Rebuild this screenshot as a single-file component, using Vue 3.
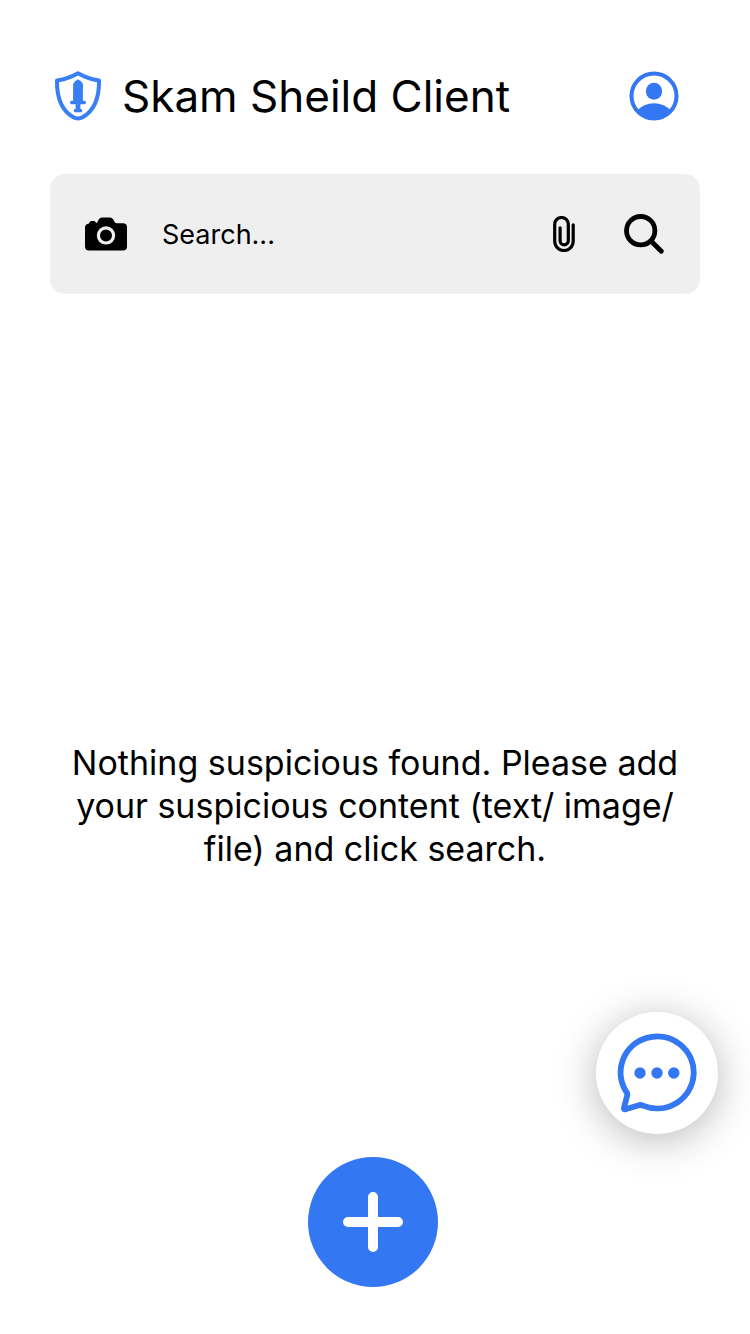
<script setup>
import { ref } from 'vue'

const query = ref('')
</script>

<template>
  <div class="page">
    <header class="header">
      <svg class="shield" viewBox="14 10 48 52" aria-hidden="true">
        <path class="line" d="M38 13.300Q28 19 17 20.500C16.700 38 22 50.500 33 57Q38 60 43 57C54 50.500 59.300 38 59 20.500Q48 19 38 13.300Z" />
        <path d="M38 19.2Q41.5 20.8 42.9 24V40.7H44.5Q46 41 46 42.5T44.5 44.3H40.4V49H41Q42.3 49.2 42.3 50.6T41 52.3H35Q33.7 52 33.7 50.6T35 49H35.6V44.3H31.5Q30 44 30 42.5T31.5 40.7H33.1V24Q34.5 20.8 38 19.2Z" />
      </svg>
      <h1>Skam Sheild Client</h1>
      <button class="icon-button profile" type="button" aria-label="Profile">
        <svg viewBox="14 11 50 50" aria-hidden="true">
          <circle class="line" cx="39" cy="36" r="22.5" />
          <ellipse cx="39" cy="31.3" rx="8.1" ry="8.5" />
          <path d="M22 51Q28.5 43.3 39 43.3T56 51Q49.5 60 39 60T22 51Z" />
        </svg>
      </button>
    </header>

    <form class="search" role="search" @submit.prevent>
      <button class="icon-button" type="button" aria-label="Take a photo">
        <svg class="camera" viewBox="15 17 42 34" aria-hidden="true">
          <path d="M19 23.5Q19.3 21 21.5 21H23.8Q25.7 21 26 23Q27.2 22.8 28 21L29 19Q30 17.4 32 17.4H40Q42 17.4 43 19L44.5 21.8Q45.3 23.3 47 23.3H53Q57 23.3 57 27.3V46.5Q57 50.5 53 50.5H19Q15 50.5 15 46.5V27.5Q15 24 19 23.5Z" />
          <circle class="lens" cx="36" cy="35.4" r="7.6" />
        </svg>
      </button>
      <input v-model="query" type="text" placeholder="Search..." aria-label="Search" />
      <button class="icon-button" type="button" aria-label="Attach a file">
        <svg class="clip" viewBox="18 16 22 36" aria-hidden="true">
          <path d="M38.2 24.8V41.2A9.2 9.3 0 0 1 19.7 41.2V24.2A6.8 6.7 0 0 1 33.3 24.2V40.7A4.1 4.1 0 0 1 25.1 40.7V27.8" />
        </svg>
      </button>
      <button class="icon-button" type="submit" aria-label="Search">
        <svg class="magnifier" viewBox="89 14 40 40" aria-hidden="true">
          <circle cx="105.7" cy="30.7" r="14.2" />
          <path d="M116 41L126.3 51.3" />
        </svg>
      </button>
    </form>

    <main class="empty">
      <p>Nothing suspicious found. Please add your suspicious content (text/ image/ file) and click search.</p>
    </main>

    <footer class="footer">
      <button class="add" type="button" aria-label="Add content">
        <svg viewBox="0 0 60 60" aria-hidden="true">
          <path d="M30 5V55M5 30H55" />
        </svg>
      </button>
    </footer>

    <button class="chat" type="button" aria-label="Open chat">
      <svg viewBox="37 43 80 80" aria-hidden="true">
        <path class="bubble" d="M47.5 103.5A36.6 36 0 1 1 63 115.6Q60.5 114.500 58 115.400L45.500 119.300Q43.600 119.700 44 117.800L47.200 105.500Q47.600 104.300 46.800 102.500" />
        <circle cx="60" cy="83" r="5.7" />
        <circle cx="77" cy="83" r="5.7" />
        <circle cx="93.800" cy="83" r="5.7" />
      </svg>
    </button>
  </div>
</template>

<style>
body {
  margin: 0;
  background: #fff;
}
</style>

<style scoped>
.page {
  display: flex;
  flex-direction: column;
  box-sizing: border-box;
  min-height: 100vh;
  padding: 68px 50px 47px;
  color: #000;
  font-family: Inter, "Liberation Sans", sans-serif;
}

svg {
  display: block;
}

button {
  padding: 0;
  border: 0;
  color: inherit;
  cursor: pointer;
}

.icon-button {
  flex: none;
  background: none;
}

.header {
  display: flex;
  align-items: center;
  padding: 0 21px 0 4px;
  margin-bottom: 50px;
}

.shield {
  flex: none;
  width: 48px;
  height: 52px;
  fill: #387ff5;
}

.line {
  fill: none;
  stroke: #3477f3;
  stroke-width: 4;
  stroke-linejoin: round;
}

.shield .line {
  stroke: #387ff5;
}

h1 {
  flex: 1;
  margin: 0 0 0 20px;
  font-size: 44px;
  font-weight: 400;
  line-height: 56px;
}

.profile svg {
  width: 50px;
  height: 50px;
  fill: #3477f3;
}

.search {
  display: flex;
  align-items: center;
  gap: 49px;
  height: 120px;
  padding: 0 36px 0 35px;
  border-radius: 15px;
  background: #efefef;
}

.camera {
  width: 42px;
  height: 34px;
}

.lens {
  fill: none;
  stroke: #efefef;
  stroke-width: 3.2;
}

input {
  flex: 1;
  min-width: 0;
  padding: 2px 0 0;
  margin-left: -14px;
  border: 0;
  outline: 0;
  background: none;
  color: #000;
  font: 400 27px/34px Inter, "Liberation Sans", sans-serif;
}

input::placeholder {
  color: #000;
  opacity: 1;
}

.clip {
  width: 22px;
  height: 36px;
  fill: none;
  stroke: #000;
  stroke-width: 3.2;
  stroke-linecap: round;
}

.magnifier {
  width: 40px;
  height: 40px;
  fill: none;
  stroke: #000;
  stroke-width: 4.8;
  stroke-linecap: round;
}

.empty {
  display: flex;
  flex: 1;
  align-items: center;
  justify-content: center;
  padding: 160px 20px 0;
}

p {
  margin: 0;
  font-size: 34px;
  line-height: 43px;
  text-align: center;
}

.footer {
  display: flex;
  justify-content: center;
  padding-right: 4px;
}

.add {
  display: grid;
  place-items: center;
  width: 130px;
  height: 130px;
  border-radius: 50%;
  background: #3477f3;
}

.add svg {
  width: 60px;
  height: 60px;
  stroke: #fff;
  stroke-width: 10;
  stroke-linecap: round;
}

.chat {
  position: fixed;
  right: 32px;
  bottom: 200px;
  display: grid;
  place-items: center;
  width: 122px;
  height: 122px;
  border-radius: 50%;
  background: #fff;
  box-shadow: 0 6px 40px rgba(0, 0, 0, 0.28);
}

.chat svg {
  width: 80px;
  height: 80px;
  fill: #3477f3;
}

.chat .bubble {
  fill: none;
  stroke: #3477f3;
  stroke-width: 5.8;
  stroke-linejoin: round;
}
</style>
